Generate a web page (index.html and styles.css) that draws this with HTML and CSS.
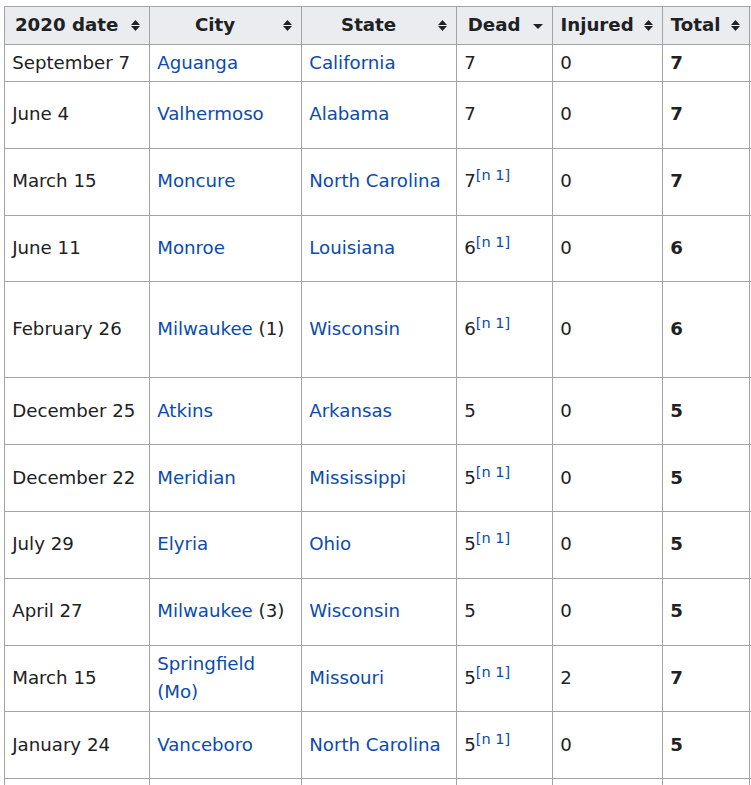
FILE: index.html
```html
<!DOCTYPE html>
<html lang="en">
<head>
<meta charset="utf-8">
<title>2020 tornadoes</title>
<link rel="stylesheet" href="styles.css">
</head>
<body>
<table class="wikitable">
  <colgroup>
    <col class="c-date"><col class="c-city"><col class="c-state"><col class="c-dead"><col class="c-inj"><col class="c-total"><col class="c-extra">
  </colgroup>
  <thead>
    <tr class="head">
      <th>2020 date<svg class="sort" viewBox="0 0 9 11" width="9" height="11"><polygon points="0,5 4.5,0 9,5"/><polygon points="0,6 4.5,11 9,6"/></svg></th>
      <th>City<svg class="sort" viewBox="0 0 9 11" width="9" height="11"><polygon points="0,5 4.5,0 9,5"/><polygon points="0,6 4.5,11 9,6"/></svg></th>
      <th>State<svg class="sort" viewBox="0 0 9 11" width="9" height="11"><polygon points="0,5 4.5,0 9,5"/><polygon points="0,6 4.5,11 9,6"/></svg></th>
      <th>Dead<svg class="sort down" viewBox="0 0 10 5" width="10" height="5"><polygon points="0,0 5,5 10,0"/></svg></th>
      <th>Injured<svg class="sort" viewBox="0 0 9 11" width="9" height="11"><polygon points="0,5 4.5,0 9,5"/><polygon points="0,6 4.5,11 9,6"/></svg></th>
      <th>Total<svg class="sort" viewBox="0 0 9 11" width="9" height="11"><polygon points="0,5 4.5,0 9,5"/><polygon points="0,6 4.5,11 9,6"/></svg></th>
      <th></th>
    </tr>
  </thead>
  <tbody>
    <tr><td>September 7</td><td><a href="#">Aguanga</a></td><td><a href="#">California</a></td><td>7</td><td>0</td><td class="b">7</td><td></td></tr>
    <tr class="tall"><td>June 4</td><td><a href="#">Valhermoso</a></td><td><a href="#">Alabama</a></td><td>7</td><td>0</td><td class="b">7</td><td></td></tr>
    <tr class="tall"><td>March 15</td><td><a href="#">Moncure</a></td><td><a href="#">North Carolina</a></td><td>7<sup class="ref">[n 1]</sup></td><td>0</td><td class="b">7</td><td></td></tr>
    <tr class="tall"><td>June 11</td><td><a href="#">Monroe</a></td><td><a href="#">Louisiana</a></td><td>6<sup class="ref">[n 1]</sup></td><td>0</td><td class="b">6</td><td></td></tr>
    <tr class="taller"><td>February 26</td><td><a href="#">Milwaukee</a> (1)</td><td><a href="#">Wisconsin</a></td><td>6<sup class="ref">[n 1]</sup></td><td>0</td><td class="b">6</td><td></td></tr>
    <tr class="tall"><td>December 25</td><td><a href="#">Atkins</a></td><td><a href="#">Arkansas</a></td><td>5</td><td>0</td><td class="b">5</td><td></td></tr>
    <tr class="tall"><td>December 22</td><td><a href="#">Meridian</a></td><td><a href="#">Mississippi</a></td><td>5<sup class="ref">[n 1]</sup></td><td>0</td><td class="b">5</td><td></td></tr>
    <tr class="tall"><td>July 29</td><td><a href="#">Elyria</a></td><td><a href="#">Ohio</a></td><td>5<sup class="ref">[n 1]</sup></td><td>0</td><td class="b">5</td><td></td></tr>
    <tr class="tall"><td>April 27</td><td><a href="#">Milwaukee</a> (3)</td><td><a href="#">Wisconsin</a></td><td>5</td><td>0</td><td class="b">5</td><td></td></tr>
    <tr class="tall"><td>March 15</td><td><a href="#">Springfield (Mo)</a></td><td><a href="#">Missouri</a></td><td>5<sup class="ref">[n 1]</sup></td><td>2</td><td class="b">7</td><td></td></tr>
    <tr class="tall"><td>January 24</td><td><a href="#">Vanceboro</a></td><td><a href="#">North Carolina</a></td><td>5<sup class="ref">[n 1]</sup></td><td>0</td><td class="b">5</td><td></td></tr>
    <tr class="tall"><td></td><td></td><td></td><td></td><td></td><td></td><td></td></tr>
  </tbody>
</table>
</body>
</html>
```
FILE: styles.css
```css
html, body {
  margin: 0;
  padding: 0;
  overflow: hidden;
  background: #ffffff;
}
body {
  font-family: "DejaVu Sans", sans-serif;
  font-size: 18.2px;
  line-height: 28.8px;
  color: #202122;
}
.wikitable {
  margin: 6px 0 0 4px;
  border-collapse: collapse;
  table-layout: fixed;
  width: 845px;
  background: #ffffff;
  color: #202122;
}
.c-date { width: 145px; }
.c-city { width: 152px; }
.c-state { width: 155px; }
.c-dead { width: 96px; }
.c-inj { width: 110px; }
.c-total { width: 87px; }
.c-extra { width: 100px; }
.wikitable th,
.wikitable td {
  border: 1px solid #a3a3a3;
  padding: 3.6px 7.2px;
  vertical-align: middle;
  text-align: left;
  overflow: hidden;
}
.wikitable th {
  background: #eaecf0;
  font-weight: bold;
  text-align: center;
  padding-right: 28px;
  position: relative;
  white-space: nowrap;
}
.head { height: 38px; }
.tall { height: 66.8px; }
.taller { height: 96px; }
.sort {
  position: absolute;
  right: 9.5px;
  top: 50%;
  margin-top: -5.5px;
  fill: #202122;
}
.sort.down {
  margin-top: -1.5px;
  right: 9px;
}
.wikitable a {
  color: #0b4bab;
  text-decoration: none;
}
.b { font-weight: bold; }
.ref {
  font-size: 80%;
  line-height: 1;
  vertical-align: super;
  color: #0b4bab;
}
```
